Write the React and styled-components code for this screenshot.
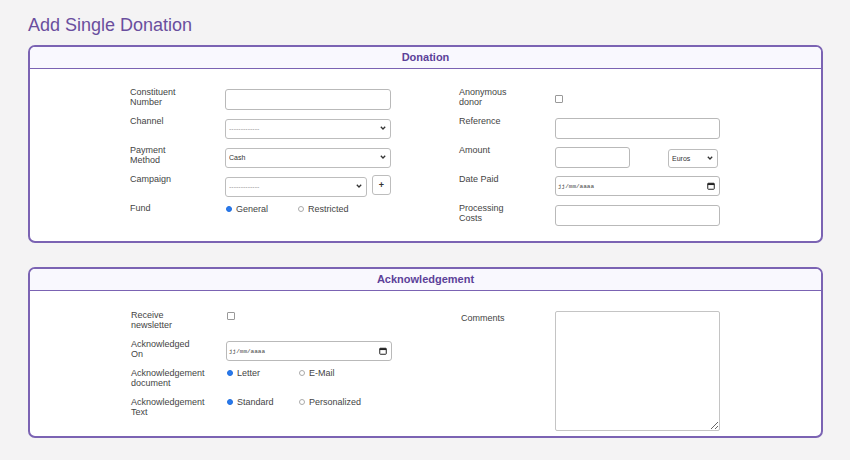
import React from "react";
import styled, { createGlobalStyle } from "styled-components";

const Global = createGlobalStyle`
  body {
    margin: 0;
    background: #f4f3f4;
    font-family: "Liberation Sans", Arial, sans-serif;
    color: #333;
  }
`;

const Page = styled.div`
  padding: 13px 27px 20px 28px;
`;
const Title = styled.h1`
  margin: 0 0 8px;
  font-size: 18px;
  font-weight: normal;
  color: #6a4e9e;
  line-height: 24px;
`;
const Panel = styled.section`
  border: 2px solid #7b63b3;
  border-radius: 7px;
  background: #fff;
  overflow: hidden;
  & + & {
    margin-top: 24px;
  }
`;
const PanelHead = styled.h2`
  margin: 0;
  background: #f9f8fe;
  border-bottom: 1.5px solid #7b63b3;
  font-size: 11px;
  font-weight: bold;
  color: #5c4199;
  text-align: center;
  line-height: 21px;
`;
const PanelBody = styled.div`
  display: flex;
  gap: 68px;
  padding: 18px 0 ${(p) => p.$bottom}px ${(p) => p.$left}px;
`;
const Column = styled.div`
  display: grid;
  grid-template-columns: ${(p) => p.$label}px ${(p) => p.$field}px;
  row-gap: 6px;
  align-content: start;
  padding-top: ${(p) => p.$top || 0}px;
`;
const Label = styled.label`
  font-size: 9px;
  line-height: 10px;
  color: #444;
  padding-top: ${(p) => p.$top || 0}px;
  padding-left: ${(p) => p.$left || 0}px;
  min-height: 23px;
`;
const Field = styled.div`
  display: flex;
  align-items: flex-start;
  gap: 5px;
  padding-top: ${(p) => p.$top || 0}px;
`;
const TextInput = styled.input`
  box-sizing: border-box;
  width: ${(p) => p.$w || "100%"};
  height: 21px;
  border: 1px solid #b9b9b9;
  border-radius: 3px;
  background: #fff;
  margin: 0;
`;
const SelectWrap = styled.div`
  position: relative;
  width: ${(p) => p.$w || "100%"};
  margin-left: ${(p) => p.$ml || 0}px;
  svg {
    position: absolute;
    right: 5px;
    top: 50%;
    margin-top: -2px;
    pointer-events: none;
  }
`;
const SelectBox = styled.select`
  box-sizing: border-box;
  width: 100%;
  height: ${(p) => p.$h || 20}px;
  border: 1px solid #bdbdbd;
  border-radius: 3px;
  background: #fff;
  appearance: none;
  font-family: "Liberation Sans", Arial, sans-serif;
  font-size: 7px;
  color: ${(p) => (p.$muted ? "#999" : "#333")};
  margin: 0;
  padding: 0 3px;
`;
const PlusButton = styled.button`
  box-sizing: border-box;
  width: 19px;
  height: 20px;
  border: 1px solid #bdbdbd;
  border-radius: 3px;
  background: #fff;
  font-size: 9px;
  font-weight: bold;
  color: #333;
  padding: 0;
  line-height: 1;
`;
const DateBox = styled.div`
  box-sizing: border-box;
  width: 100%;
  height: 20px;
  border: 1px solid #b9b9b9;
  border-radius: 3px;
  background: #fff;
  display: flex;
  align-items: center;
  justify-content: space-between;
  padding: 0 4px 0 2px;
  font-family: "Liberation Mono", monospace;
  font-size: 6px;
  color: #444;
`;
const Check = styled.span`
  display: inline-block;
  width: 6px;
  height: 6px;
  border: 1px solid #999;
  border-radius: 1px;
  background: #fff;
  margin-left: ${(p) => p.$ml || 0}px;
`;
const Radios = styled.div`
  display: flex;
  font-size: 9px;
  color: #444;
  padding-left: 1px;
`;
const RadioOption = styled.span`
  display: flex;
  align-items: center;
  gap: 4px;
  width: 72px;
  line-height: 10px;
`;
const Dot = styled.span`
  box-sizing: border-box;
  width: 6px;
  height: 6px;
  border-radius: 50%;
  border: ${(p) => (p.$on ? "1.5px solid #1f6fe0" : "1px solid #aaa")};
  background: ${(p) => (p.$on ? "#2a79ec" : "#fff")};
`;
const Comments = styled.textarea`
  box-sizing: border-box;
  width: 100%;
  height: 120px;
  border: 1px solid #c4c4c4;
  border-radius: 2px;
  margin: 0;
`;

const Chevron = () => (
  <svg width="6" height="4" viewBox="0 0 6 4">
    <path d="M0.8 0.8 L3 3 L5.2 0.8" fill="none" stroke="#333" strokeWidth="1.3" />
  </svg>
);

const Select = ({ w, ml, h, muted, children }) => (
  <SelectWrap $w={w} $ml={ml}>
    <SelectBox $h={h} $muted={muted}>{children}</SelectBox>
    <Chevron />
  </SelectWrap>
);

const CalendarIcon = () => (
  <svg width="8" height="8" viewBox="0 0 8 8">
    <rect x="0.75" y="1.25" width="6.5" height="6" rx="0.6" fill="none" stroke="#222" strokeWidth="1" />
    <rect x="0.75" y="1.25" width="6.5" height="1.8" fill="#222" />
  </svg>
);

const DateField = () => (
  <DateBox>
    <span>jj/mm/aaaa</span>
    <CalendarIcon />
  </DateBox>
);

const Radio = ({ on, children }) => (
  <RadioOption>
    <Dot $on={on} />
    {children}
  </RadioOption>
);

const TwoLine = ({ a, b }) => (
  <>
    {a}
    <br />
    {b}
  </>
);

export default function App() {
  return (
    <Page>
      <Global />
      <Title>Add Single Donation</Title>
      <Panel>
        <PanelHead>Donation</PanelHead>
        <PanelBody $left={100} $bottom={15}>
          <Column $label={95} $field={166}>
            <Label><TwoLine a="Constituent" b="Number" /></Label>
            <Field $top={2}><TextInput /></Field>
            <Label>Channel</Label>
            <Field $top={1}><Select muted><option>-------------</option></Select></Field>
            <Label><TwoLine a="Payment" b="Method" /></Label>
            <Field $top={1}><Select><option>Cash</option></Select></Field>
            <Label>Campaign</Label>
            <Field $top={1}>
              <Select muted w="142px"><option>-------------</option></Select>
              <PlusButton>+</PlusButton>
            </Field>
            <Label>Fund</Label>
            <Field $top={1}>
              <Radios>
                <Radio on>General</Radio>
                <Radio>Restricted</Radio>
              </Radios>
            </Field>
          </Column>
          <Column $label={96} $field={165}>
            <Label><TwoLine a="Anonymous" b="donor" /></Label>
            <Field $top={8}><Check /></Field>
            <Label>Reference</Label>
            <Field $top={2}><TextInput /></Field>
            <Label>Amount</Label>
            <Field $top={2}>
              <TextInput $w="75px" />
              <Select ml={33} w="50px" h={19}><option>Euros</option></Select>
            </Field>
            <Label>Date Paid</Label>
            <Field $top={2}><DateField /></Field>
            <Label><TwoLine a="Processing" b="Costs" /></Label>
            <Field $top={2}><TextInput /></Field>
          </Column>
        </PanelBody>
      </Panel>
      <Panel>
        <PanelHead>Acknowledgement</PanelHead>
        <PanelBody $left={101} $bottom={5}>
          <Column $label={95} $field={166} $top={1}>
            <Label><TwoLine a="Receive" b="newsletter" /></Label>
            <Field $top={2}><Check $ml={1} /></Field>
            <Label><TwoLine a="Acknowledged" b="On" /></Label>
            <Field $top={2}><DateField /></Field>
            <Label><TwoLine a="Acknowledgement" b="document" /></Label>
            <Field>
              <Radios>
                <Radio on>Letter</Radio>
                <Radio>E-Mail</Radio>
              </Radios>
            </Field>
            <Label><TwoLine a="Acknowledgement" b="Text" /></Label>
            <Field>
              <Radios>
                <Radio on>Standard</Radio>
                <Radio>Personalized</Radio>
              </Radios>
            </Field>
          </Column>
          <Column $label={95} $field={165} $top={2}>
            <Label $top={2} $left={1}>Comments</Label>
            <Field><Comments /></Field>
          </Column>
        </PanelBody>
      </Panel>
    </Page>
  );
}
